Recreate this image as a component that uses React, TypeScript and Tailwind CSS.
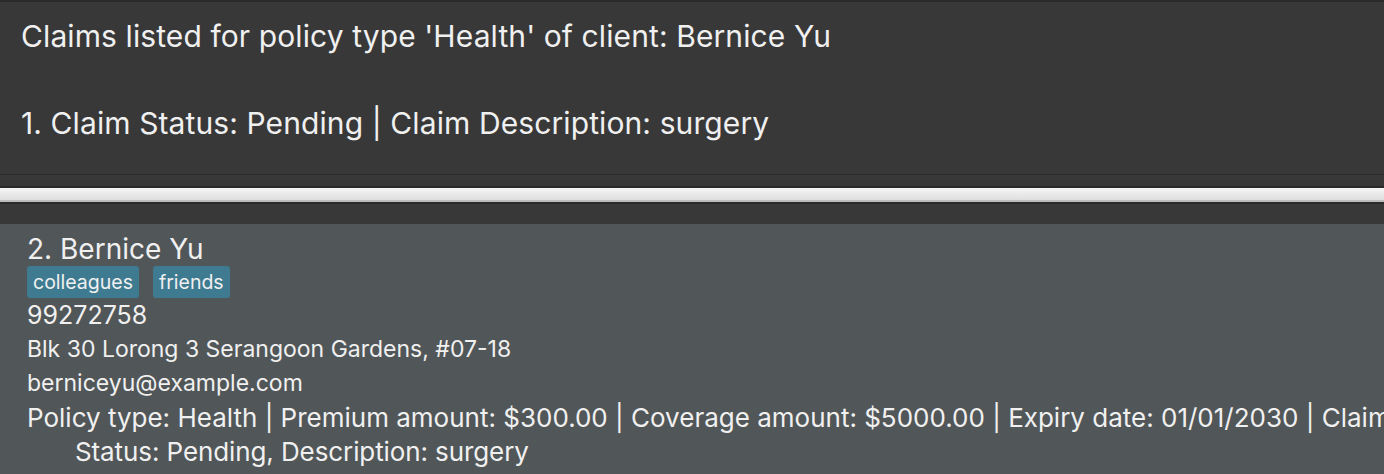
export default function App() {
  const font = { fontFamily: "Inter, 'Noto Sans', sans-serif" };
  return (
    <div className="h-[474px] w-[1384px] overflow-hidden bg-[#383838] text-[#f0f0f0]" style={font}>
      <div className="h-[2px] bg-[#2a2a2a]" />
      {/* result display */}
      <div className="h-[172px] px-[21px] pt-[15px] text-[30px] leading-[39px] tracking-[0.1px]">
        <div>Claims listed for policy type 'Health' of client: Bernice Yu</div>
        <div className="h-[48px]" />
        <div>1. Claim Status: Pending | Claim Description: surgery</div>
      </div>
      <div className="h-[1px] bg-[#2a2a2a]" />
      <div className="h-[11px]" />
      <div className="h-[2px] bg-[#2a2a2a]" />
      {/* splitter */}
      <div className="h-[12px] bg-gradient-to-b from-[#f6f6f6] to-[#dedede]" />
      <div className="h-[2px] bg-[#bdbdbd]" />
      <div className="h-[2px] bg-[#2a2a2a]" />
      <div className="h-[20px]" />
      {/* person card */}
      <div className="h-[250px] bg-[#515658] pl-[27px] pt-[10px]">
        <div className="text-[28px] leading-[31px]">2. Bernice Yu</div>
        <div className="mt-[1px] flex gap-[14px]">
          <span className="rounded-[3px] bg-[#3e7b91] px-[6px] text-[19.5px] leading-[32px]">colleagues</span>
          <span className="rounded-[3px] bg-[#3e7b91] px-[6px] text-[19.5px] leading-[32px]">friends</span>
        </div>
        <div className="text-[25px] leading-[34px]">99272758</div>
        <div className="text-[23px] leading-[34px]">Blk 30 Lorong 3 Serangoon Gardens, #07-18</div>
        <div className="text-[23px] leading-[34px]">berniceyu@example.com</div>
        <div className="whitespace-nowrap text-[26px] leading-[35px]">
          Policy type: Health | Premium amount: $300.00 | Coverage amount: $5000.00 | Expiry date: 01/01/2030 | Claim
        </div>
        <div className="pl-[48px] text-[26px] leading-[34px] tracking-[-0.1px]">Status: Pending, Description: surgery</div>
      </div>
    </div>
  );
}
